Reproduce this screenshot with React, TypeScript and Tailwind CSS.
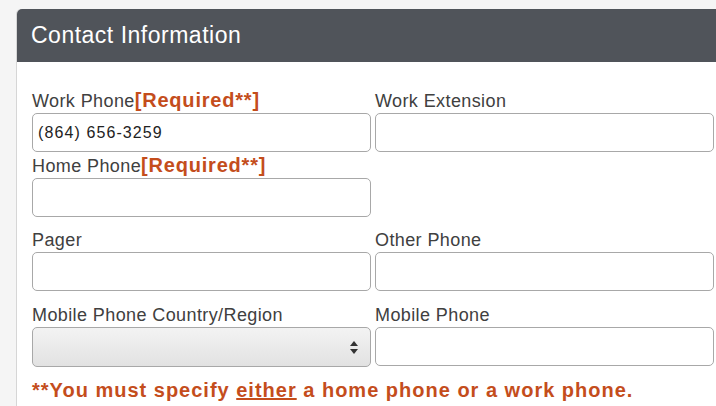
import { useState } from "react";

const font = { fontFamily: '"Liberation Sans", Arial, sans-serif' };

function Label({ text, required }: { text: string; required?: boolean }) {
  return (
    <div className="h-[22px] flex items-end pb-[3px] text-[18px] leading-none tracking-[0.4px] text-[#404040]">
      <span>{text}</span>
      {required && (
        <span className="text-[20px] font-bold tracking-[0.8px] text-[#c44d1c]">[Required**]</span>
      )}
    </div>
  );
}

function TextField({
  label,
  required,
  value,
}: {
  label: string;
  required?: boolean;
  value?: string;
}) {
  const [v, setV] = useState(value ?? "");
  return (
    <div className="flex flex-col">
      <Label text={label} required={required} />
      <input
        value={v}
        onChange={(e) => setV(e.target.value)}
        className="h-[39px] w-full rounded-[5px] border border-[#a8a8a8] bg-white px-[5px] text-[16px] tracking-[1.1px] text-[#222] outline-none"
        style={font}
      />
    </div>
  );
}

export default function App() {
  return (
    <div className="min-h-[406px] w-[716px] overflow-hidden bg-[#f5f5f5] pt-[9px] pl-[16px]" style={font}>
      <div className="rounded-tl-[5px] border-l border-[#d6d6d6] bg-white pb-[20px]">
        <div className="flex h-[53px] items-center rounded-tl-[5px] bg-[#50545a] pl-[14px] text-[23px] tracking-[0.5px] text-white">
          Contact Information
        </div>

        <div className="pt-[29px] pl-[15px]">
          <div className="grid grid-cols-[339px_339px] gap-x-[4px]">
            <TextField label="Work Phone" required value="(864) 656-3259" />
            <TextField label="Work Extension" />
          </div>

          <div className="mt-[4px] grid grid-cols-[339px_339px] gap-x-[4px]">
            <TextField label="Home Phone" required />
          </div>

          <div className="mt-[13px] grid grid-cols-[339px_339px] gap-x-[4px]">
            <TextField label="Pager" />
            <TextField label="Other Phone" />
          </div>

          <div className="mt-[14px] grid grid-cols-[339px_339px] gap-x-[4px]">
            <div className="flex flex-col">
              <Label text="Mobile Phone Country/Region" />
              <div className="relative flex h-[40px] items-center justify-end rounded-[5px] border border-[#a8a8a8] bg-gradient-to-b from-[#f3f3f3] to-[#e2e2e2] pr-[12px]">
                {/* stepper arrows of the select */}
                <svg width="8" height="13" viewBox="0 0 8 13">
                  <path d="M4 0 L8 5 L0 5 Z" fill="#333" />
                  <path d="M4 13 L8 8 L0 8 Z" fill="#333" />
                </svg>
              </div>
            </div>
            <TextField label="Mobile Phone" />
          </div>

          <p className="mt-[8px] text-[20px] font-bold tracking-[1px] text-[#c44d1c]">
            **You must specify <span className="underline">either</span> a home phone or a work phone.
          </p>
        </div>
      </div>
    </div>
  );
}
